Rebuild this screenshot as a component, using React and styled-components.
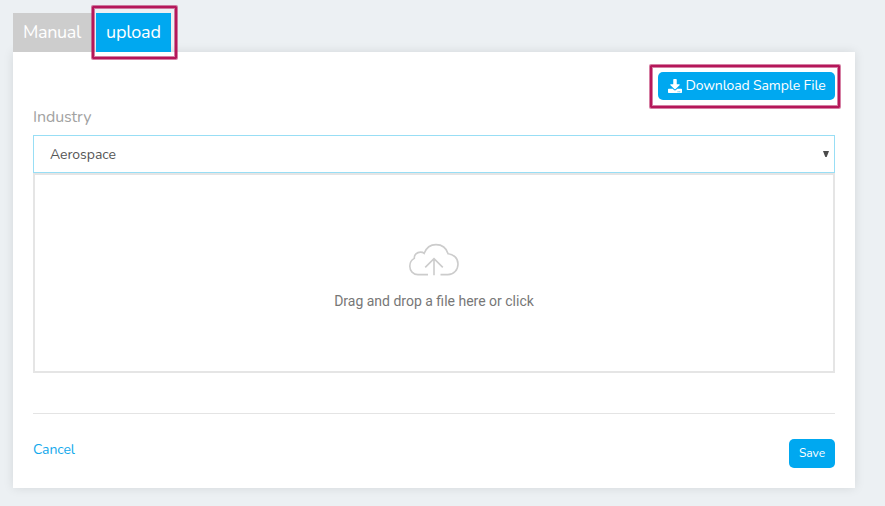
import React from 'react';
import styled, { createGlobalStyle } from 'styled-components';
import { FaDownload } from 'react-icons/fa';

const GlobalStyle = createGlobalStyle`
  *, *::before, *::after { box-sizing: border-box; }
  body {
    margin: 0;
    background: #ecf0f3;
    font-family: Nunito, Lato, sans-serif;
    overflow: hidden;
  }
  button, select { font-family: inherit; }
`;

const Page = styled.main`
  width: 885px;
  height: 506px;
  padding: 13px 30px 18px 13px;
`;

const Tabs = styled.nav`
  display: flex;
  gap: 4px;
  height: 39px;
`;

const Tab = styled.button`
  position: relative;
  width: ${(p) => (p.$active ? '75px' : '79px')};
  height: 39px;
  padding: 0 0 1px 10px;
  border: 0;
  background: ${(p) => (p.$active ? '#00a8f0' : '#cdcdcd')};
  color: #fff;
  font-size: 18px;
  line-height: 38px;
  letter-spacing: ${(p) => (p.$active ? '-0.2px' : '-0.35px')};
  text-align: left;
  white-space: nowrap;
`;

const Highlight = styled.span`
  position: absolute;
  inset: ${(p) => p.$inset};
  border: 2px solid #b5175a;
  border-radius: 1px;
  box-shadow: 0 0 0 1px rgba(181, 23, 90, 0.55), inset 0 0 0 1px rgba(181, 23, 90, 0.55);
  pointer-events: none;
`;

const Card = styled.section`
  display: flex;
  flex-direction: column;
  height: 436px;
  padding: 20px;
  background: #fff;
  box-shadow: 0 0 10px rgba(0, 0, 0, 0.1);
`;

const Toolbar = styled.div`
  display: flex;
  justify-content: flex-end;
`;

const DownloadButton = styled.button`
  position: relative;
  display: flex;
  align-items: center;
  gap: 3.4px;
  width: 177px;
  height: 28px;
  padding: 0 0 1px 10px;
  border: 0;
  border-radius: 5px;
  background: #00a8f0;
  color: #fff;
  font-size: 14px;
  letter-spacing: -0.13px;
  white-space: nowrap;

  svg { flex: none; }
`;

const Label = styled.label`
  margin-top: 7px;
  height: 28px;
  color: #a2a2a2;
  font-size: 16px;
  line-height: 20px;
  letter-spacing: -0.1px;
`;

const SelectBox = styled.div`
  display: flex;
  align-items: center;
  justify-content: space-between;
  height: 38px;
  padding: 0 5px 0 16px;
  border: 1px solid #98def5;
  color: #555;
  font-size: 14px;
  letter-spacing: -0.05px;
`;

const DropZone = styled.div`
  display: flex;
  flex-direction: column;
  align-items: center;
  height: 200px;
  padding-top: 68px;
  border: 2px solid #e5e5e5;
  color: #777;
  font: 14px/20px Roboto, sans-serif;
`;

const DropText = styled.span`
  margin-top: 14px;
`;

const Footer = styled.footer`
  display: flex;
  justify-content: space-between;
  align-items: flex-start;
  margin-top: 40px;
  padding-top: 25px;
  border-top: 1px solid #e4e4e4;
`;

const Cancel = styled.a`
  color: #13a9ec;
  font-size: 14px;
  line-height: 22px;
  letter-spacing: -0.1px;
`;

const SaveButton = styled.button`
  width: 46px;
  height: 29px;
  padding: 0 0 1px;
  border: 0;
  border-radius: 5px;
  background: #00a8f0;
  color: #fff;
  font-size: 12px;
`;

const CloudIcon = () => (
  <svg width="52" height="34" viewBox="0 0 52 34" fill="none" stroke="#ccc" strokeWidth="1.6" aria-hidden="true">
    <path d="M20 31.6H10C5 31.6 1.8 27.7 1.8 23.2c0-3.6 1.8-6.4 4.5-7.8C6 11.7 9 9.1 12.4 9.1c1.5 0 2.8.3 3.8 1.2C18.2 5 22.4 1.6 28 1.6c6.2 0 10.5 3.8 12.1 9.2 5.6.5 9.9 4.5 9.9 10.1 0 6-4.3 10.7-10.1 10.7h-7.4" />
    <path d="M26 32.3V15.6M17.2 24.4 26 15.6l8.8 8.8" />
  </svg>
);

const ArrowIcon = () => (
  <svg width="6" height="6" viewBox="0 0 6 6" fill="#4b4b4b" aria-hidden="true">
    <path d="M0 0h6L3.7 6H2.3z" />
  </svg>
);

export default function App() {
  return (
    <>
      <GlobalStyle />
      <Page>
        <Tabs>
          <Tab>Manual</Tab>
          <Tab $active>
            upload
            <Highlight $inset="-7px -6px -7px -4px" />
          </Tab>
        </Tabs>
        <Card>
          <Toolbar>
            <DownloadButton>
              <FaDownload size={14} />
              Download Sample File
              <Highlight $inset="-7px -5px -8px -8px" />
            </DownloadButton>
          </Toolbar>
          <Label>Industry</Label>
          <SelectBox>
            Aerospace
            <ArrowIcon />
          </SelectBox>
          <DropZone>
            <CloudIcon />
            <DropText>Drag and drop a file here or click</DropText>
          </DropZone>
          <Footer>
            <Cancel>Cancel</Cancel>
            <SaveButton>Save</SaveButton>
          </Footer>
        </Card>
      </Page>
    </>
  );
}
